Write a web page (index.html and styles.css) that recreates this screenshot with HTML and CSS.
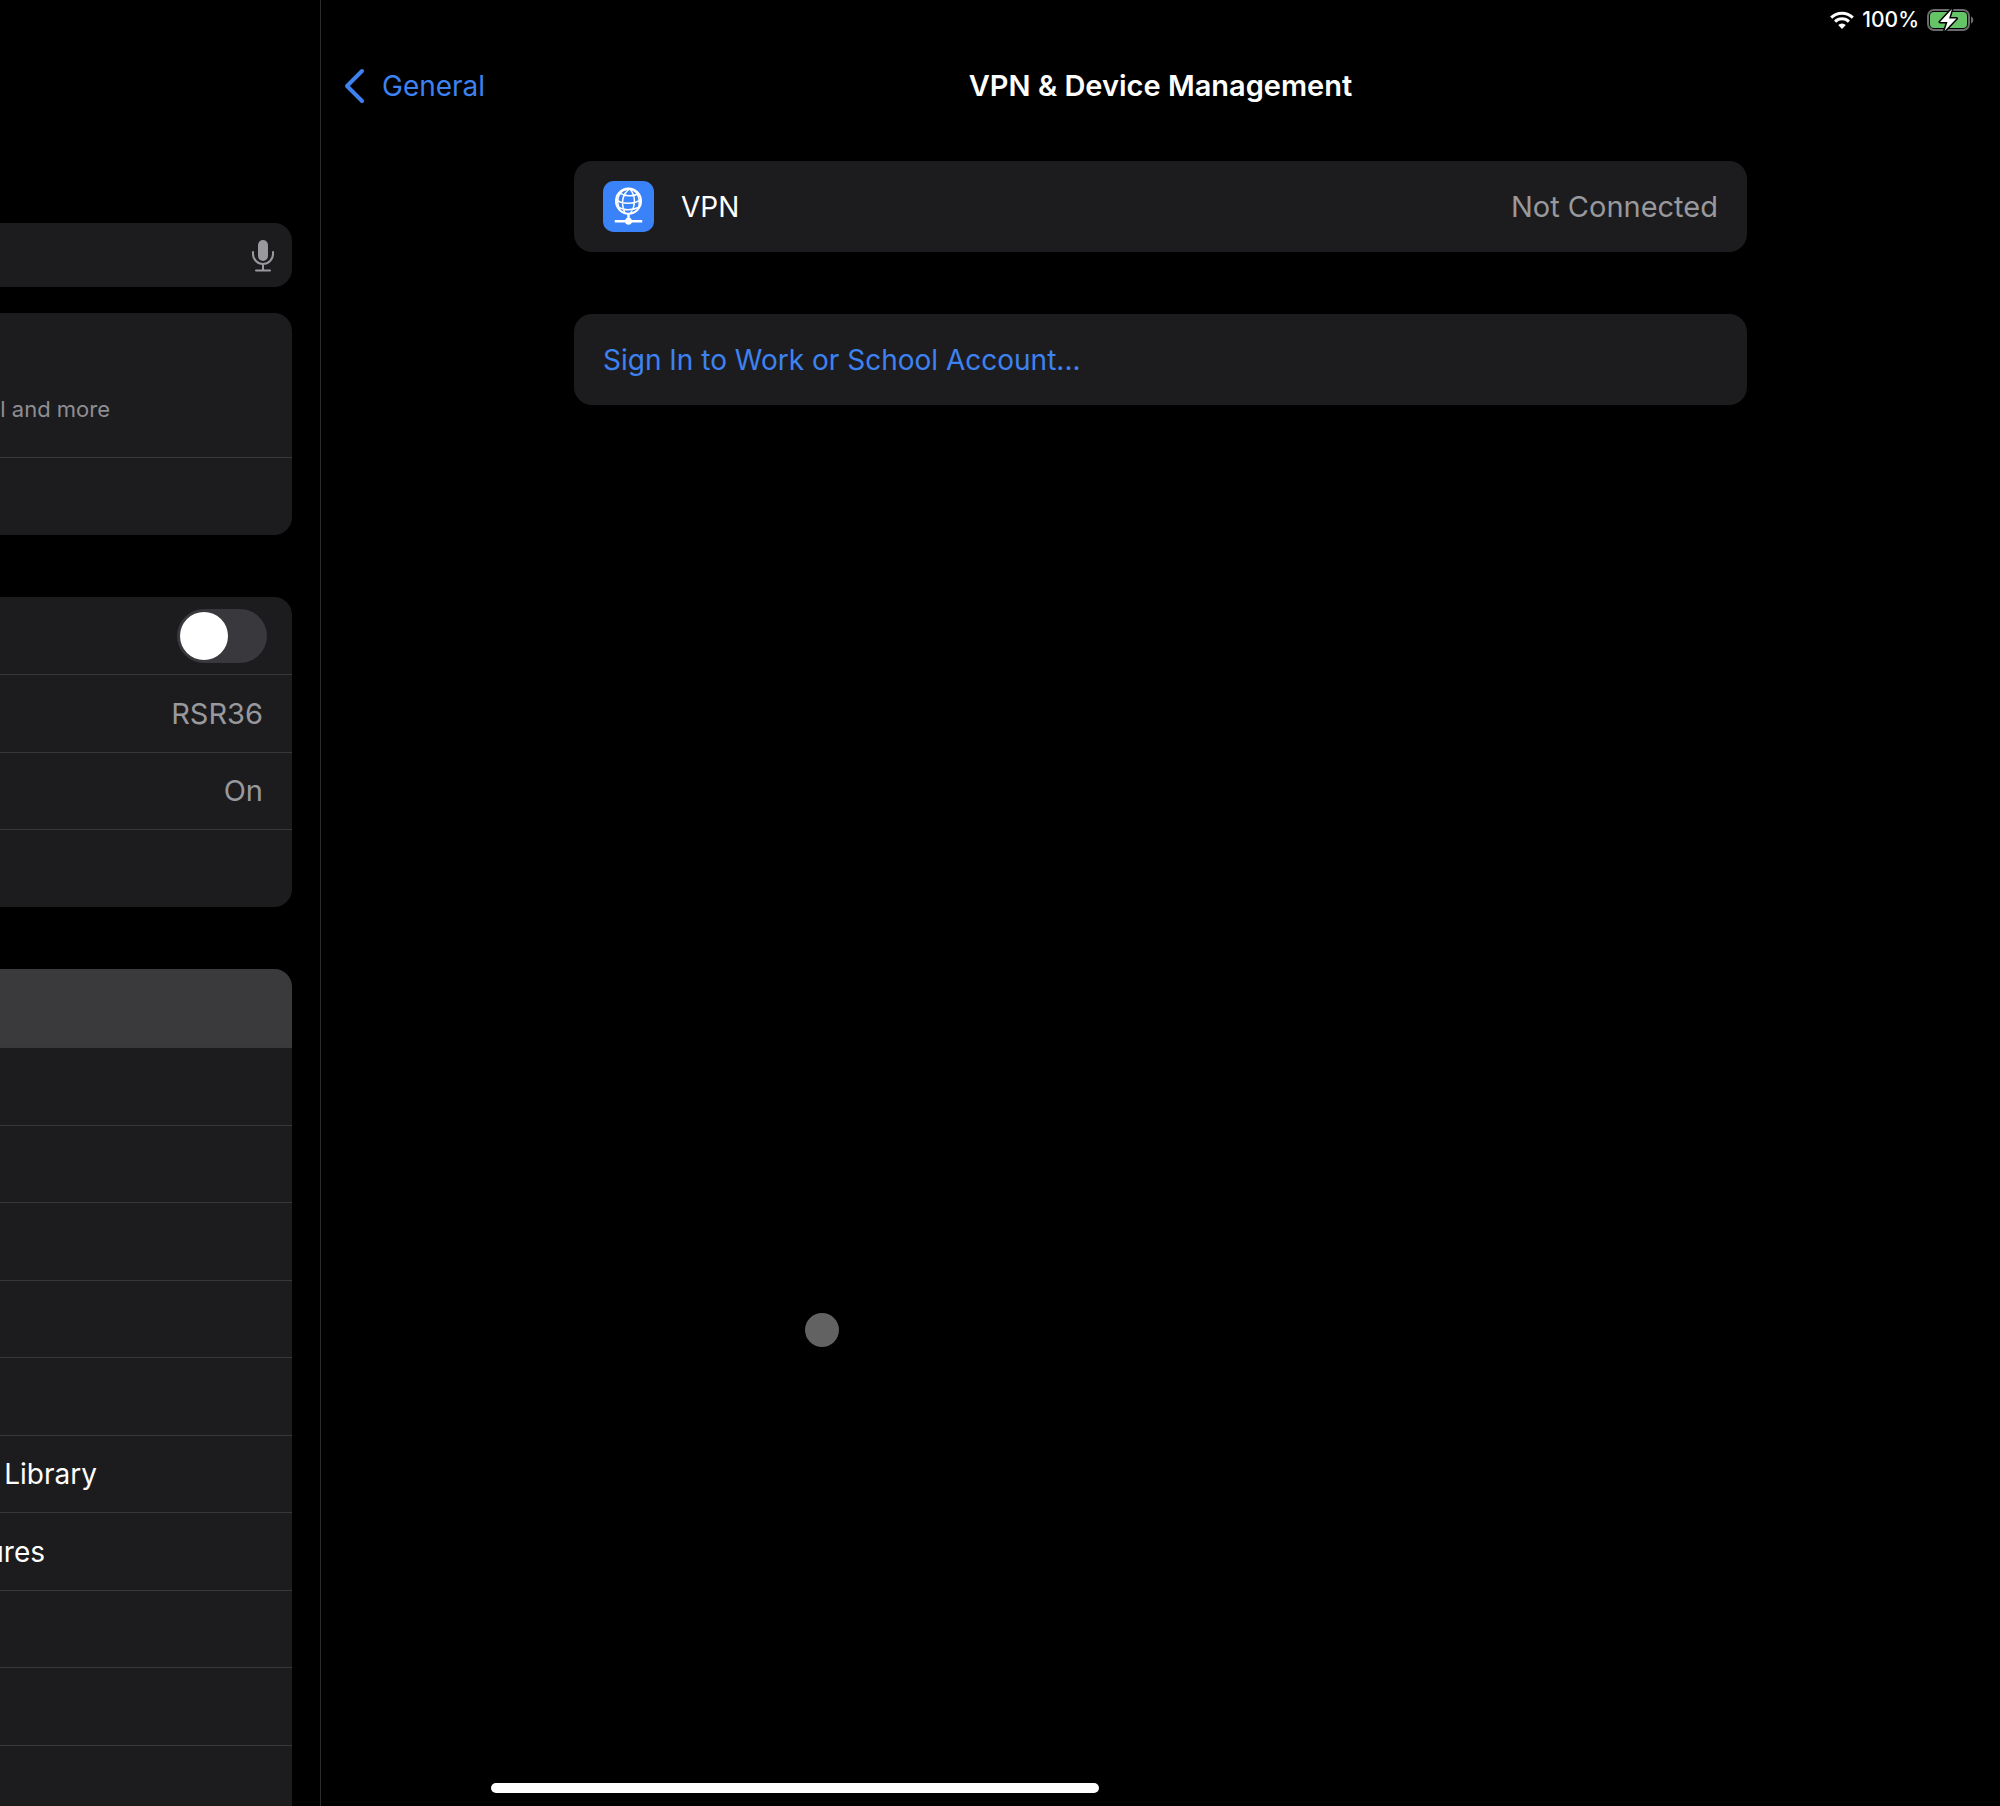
FILE: index.html
```html
<!DOCTYPE html>
<html lang="en">
<head>
<meta charset="utf-8">
<meta name="viewport" content="width=device-width, initial-scale=1">
<title>VPN &amp; Device Management</title>
<link rel="stylesheet" href="styles.css">
</head>
<body>
<div class="screen">
  <aside class="sidebar">
    <div class="search">
      <input class="search-input" type="search" aria-label="Search settings">
      <button class="mic" type="button" aria-label="Dictate">
        <svg width="24" height="34" viewBox="0 0 24 34" fill="none" stroke="#98989d" stroke-width="2" stroke-linecap="round">
          <rect x="7" y="2" width="10" height="21" rx="5" fill="#98989d" stroke="none"/>
          <path d="M2 14v2a10 10 0 0 0 20 0v-2M12 26v6M5 32.500h14"/>
        </svg>
      </button>
    </div>

    <ul class="group">
      <li class="row row-account"><span class="tail tail-account">l and more</span></li>
      <li class="row"></li>
    </ul>

    <ul class="group">
      <li class="row row-switch"><input class="switch" type="checkbox" role="switch" aria-label="Airplane Mode"></li>
      <li class="row"><span class="value">RSR36</span></li>
      <li class="row"><span class="value">On</span></li>
      <li class="row"></li>
    </ul>

    <ul class="group">
      <li class="row row-selected"></li>
      <li class="row"></li>
      <li class="row"></li>
      <li class="row"></li>
      <li class="row"></li>
      <li class="row"></li>
      <li class="row"><span class="tail tail-library">Library</span></li>
      <li class="row"><span class="tail tail-gestures">ures</span></li>
      <li class="row"></li>
      <li class="row"></li>
      <li class="row"></li>
    </ul>
  </aside>

  <main class="detail">
    <div class="status">
      <svg width="24" height="18" viewBox="0 0 24 18" fill="none" stroke="#fff" stroke-width="3">
        <path d="M1.200 6.600a15.300 15.300 0 0 1 21.600 0"/>
        <path d="M5.100 10.600a9.800 9.800 0 0 1 13.800 0"/>
        <path d="M12 18l-3.800-3.900a5.400 5.400 0 0 1 7.600 0z" fill="#fff" stroke="none"/>
      </svg>
      <span class="percent">100%</span>
      <svg width="47" height="24" viewBox="0 0 47 24">
        <rect x="1" y="2" width="41" height="20" rx="6" fill="none" stroke="#6b6b6b" stroke-width="2"/>
        <rect x="3" y="4" width="37" height="16" rx="4" fill="#65c466"/>
        <path d="M44 8.500c3 1 3 6 0 7z" fill="#6b6b6b"/>
        <path d="M25 1L13 14h7.500L17.500 23 29.500 10.500H22z" fill="#fff" stroke="#000" stroke-width="3" stroke-linejoin="round" paint-order="stroke"/>
      </svg>
    </div>

    <header class="navbar">
      <a class="back" href="#general">
        <svg width="22" height="36" viewBox="0 0 22 36" fill="none" stroke="#3e82f1" stroke-width="4" stroke-linecap="round" stroke-linejoin="round"><path d="M18 3L3 18l15 15"/></svg>
        General
      </a>
      <h1 class="title">VPN &amp; Device Management</h1>
    </header>

    <div class="content">
      <a class="card" href="#vpn">
        <svg width="51" height="51" viewBox="0 0 52 52" fill="none" stroke="#fff" stroke-width="2">
          <rect width="52" height="52" rx="11" fill="#3a82f7" stroke="none"/>
          <circle cx="26" cy="20.500" r="12.800"/>
          <path stroke-width="1.500" d="M27 8c-7 5-9 14-5 24M27 8c6 6 7 16 1 25M27 8c-10 1-15 9-10 21M27 8c8 2 12 9 9 20M17 12c5 4 13 4 19 1M13.500 19c6 5 18 5 25 0M16 27c5 3 14 3 20 0"/>
          <path stroke-width="2.500" d="M26 33v8M12 41h28"/>
          <circle cx="26" cy="41" r="3.500" fill="#fff" stroke="none"/>
        </svg>
        <span class="card-label">VPN</span>
        <span class="value">Not Connected</span>
      </a>
      <button class="card card-action" type="button">Sign In to Work or School Account...</button>
    </div>
  </main>

  <span class="pointer"></span>
  <span class="home-bar"></span>
</div>
</body>
</html>
```
FILE: styles.css
```css
* {
  box-sizing: border-box;
}

body {
  margin: 0;
  background: #000;
  color: #fff;
  font-family: Inter, "Liberation Sans", sans-serif;
  font-size: 28px;
  line-height: 36px;
}

.screen {
  position: relative;
  display: grid;
  grid-template-columns: 321px 1fr;
  height: 100vh;
  overflow: hidden;
}

/* Sidebar */
.sidebar {
  display: flex;
  flex-direction: column;
  min-height: 0;
  padding: 223px 28px 0 0;
  border-right: 1px solid #2c2c2e;
  overflow: hidden;
}

.search {
  display: flex;
  flex: none;
  align-items: center;
  height: 64px;
  margin-bottom: 26px;
  padding-right: 17px;
  border-radius: 0 18px 18px 0;
  background: #1c1c1e;
}

.search-input {
  flex: 1;
  min-width: 0;
  height: 100%;
  border: 0;
  outline: 0;
  background: transparent;
  color: #fff;
  font: inherit;
}

.mic {
  display: flex;
  padding: 0;
  border: 0;
  background: none;
}

.group {
  flex: none;
  margin: 0 0 62px;
  padding: 0;
  border-radius: 0 18px 18px 0;
  background: #1c1c1e;
  list-style: none;
  overflow: hidden;
}

.row {
  display: flex;
  align-items: center;
  height: 77px;
  padding-right: 29px;
}

.row:nth-child(even) {
  height: 78px;
}

.row + .row {
  border-top: 1px solid #38383a;
}

.row-account {
  height: 144px;
  padding-top: 48px;
}

.row-switch {
  padding-right: 25px;
}

.row-selected {
  height: 78px;
  background: #3a3a3c;
}

.tail {
  display: flex;
  justify-content: flex-end;
  white-space: nowrap;
}

.tail-account {
  width: 110px;
  color: #8e8e93;
  font-size: 22px;
}

.tail-library {
  width: 97px;
}

.tail-gestures {
  width: 45px;
}

.value {
  margin-left: auto;
  color: #98989d;
  font-size: 29px;
}

.switch {
  display: flex;
  width: 90px;
  height: 54px;
  margin: 0 0 0 auto;
  padding: 3px;
  border-radius: 27px;
  background: #39393d;
  appearance: none;
}

.switch::before {
  content: "";
  width: 48px;
  height: 48px;
  border-radius: 50%;
  background: #fff;
}

.switch:checked {
  justify-content: flex-end;
  background: #65c466;
}

/* Detail pane */
.status {
  display: flex;
  align-items: center;
  justify-content: flex-end;
  gap: 8px;
  height: 40px;
  padding-right: 26px;
}

.percent {
  font-size: 21px;
  font-weight: 500;
}

.navbar {
  display: grid;
  grid-template-columns: 1fr auto 1fr;
  align-items: center;
  height: 92px;
  padding: 0 23px;
}

.back {
  display: flex;
  align-items: center;
  gap: 16px;
  color: #3e82f1;
  text-decoration: none;
}

.title {
  margin: 0;
  font-size: 29px;
  font-weight: 600;
}

.content {
  display: flex;
  flex-direction: column;
  gap: 62px;
  max-width: 1229px;
  margin: 0 auto;
  padding: 29px 28px;
}

.card {
  display: flex;
  align-items: center;
  min-height: 91px;
  padding: 0 29px;
  border: 0;
  border-radius: 18px;
  background: #1c1c1e;
  color: #fff;
  font: inherit;
  text-align: left;
  text-decoration: none;
}

.card-label {
  margin-left: 27px;
}

.card-action {
  color: #3e82f1;
}

/* Overlays */
.pointer {
  position: absolute;
  top: 1313px;
  left: 805px;
  width: 34px;
  height: 34px;
  border-radius: 50%;
  background: #626262;
}

.home-bar {
  position: absolute;
  bottom: 13px;
  left: 491px;
  width: 608px;
  height: 10px;
  border-radius: 5px;
  background: #fff;
}
```
